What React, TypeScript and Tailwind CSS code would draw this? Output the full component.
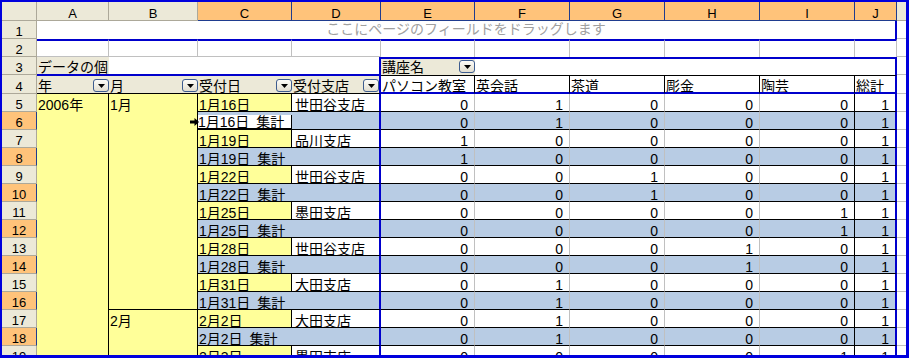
import clsx from "clsx"

const detail = [
  { date: "1月16日", branch: "世田谷支店", v: [0, 1, 0, 0, 0, 1] },
  { date: "1月19日", branch: "品川支店", v: [1, 0, 0, 0, 0, 1] },
  { date: "1月22日", branch: "世田谷支店", v: [0, 0, 1, 0, 0, 1] },
  { date: "1月25日", branch: "墨田支店", v: [0, 0, 0, 0, 1, 1] },
  { date: "1月28日", branch: "世田谷支店", v: [0, 0, 0, 1, 0, 1] },
  { date: "1月31日", branch: "大田支店", v: [0, 1, 0, 0, 0, 1] },
  { date: "2月2日", branch: "大田支店", v: [0, 1, 0, 0, 0, 1] },
  { date: "2月3日", branch: "墨田支店", v: [0, 0, 0, 0, 1, 1] },
]

const colItems = ["パソコン教室", "英会話", "茶道", "彫金", "陶芸", "総計"]

function DropBtn() {
  return (
    <span className="ml-auto flex h-[13px] w-[16px] shrink-0 items-center justify-center rounded-[3px] border border-[#3d5c8f] bg-linear-to-b from-[#fdfcf8] to-[#e2ded0]">
      <svg width="7" height="4" viewBox="0 0 7 4">
        <path d="M0 0h7L3.5 4z" fill="#000" />
      </svg>
    </span>
  )
}

function RowHead({ n }: { n: number }) {
  const sel = n >= 6 && n <= 18 && n % 2 === 0
  return (
    <div
      className={clsx(
        "flex items-end justify-center border-r border-b text-[13px] leading-[12px] text-black",
        sel ? "border-b-[#aca899] border-r-[#1f3c8f] bg-[#ffc37a]" : "border-[#aca899] bg-[#ece9d8]"
      )}
    >
      {n}
    </div>
  )
}

function Nums({ v, sub }: { v: number[]; sub: boolean }) {
  return (
    <>
      {v.map((n, i) => (
        <div
          key={i}
          className={clsx(
            "flex items-end justify-end border-b border-b-black pr-[6px] leading-[12px]",
            sub ? "bg-[#b8cce4]" : "bg-white",
            i < 4 && "border-r border-r-[#c0c0c0]",
            i === 4 && "border-r border-r-black",
            i === 5 && "border-r-2 border-r-[#0000cc]"
          )}
        >
          {n}
        </div>
      ))}
      <div className="border-b border-[#c0c0c0]" />
    </>
  )
}

function DataRows() {
  const out: JSX.Element[] = []
  detail.forEach((d, i) => {
    const r = 5 + i * 2
    out.push(<RowHead key={"h" + r} n={r} />)
    if (r === 5) {
      out.push(
        <div key="a5" className="row-span-15 border-r border-black bg-[#ffff99]">
          <div className="flex h-[17px] items-end pl-[1px] leading-[12px]">2006年</div>
        </div>
      )
      out.push(
        <div key="b5" className="row-span-12 border-r border-b border-black bg-[#ffff99]">
          <div className="flex h-[17px] items-end pl-[1px] leading-[12px]">1月</div>
        </div>
      )
    }
    if (r === 17) {
      out.push(
        <div key="b17" className="row-span-3 border-r border-black bg-[#ffff99]">
          <div className="flex h-[17px] items-end pl-[1px] leading-[12px]">2月</div>
        </div>
      )
    }
    out.push(
      <div key={"c" + r} className="flex items-end overflow-hidden whitespace-nowrap border-r border-b border-black bg-[#ffff99] pl-[1px] leading-[12px]">
        {d.date}
      </div>
    )
    out.push(
      <div key={"d" + r} className="flex items-end overflow-hidden whitespace-nowrap border-b border-r-2 border-b-black border-r-[#0000cc] bg-white pl-[3px] leading-[12px]">
        {d.branch}
      </div>
    )
    out.push(<Nums key={"n" + r} v={d.v} sub={false} />)

    if (i === 7) return
    const s = r + 1
    out.push(<RowHead key={"h" + s} n={s} />)
    if (s === 6) {
      out.push(
        <div key="c6" className="border-b border-black bg-[#b8cce4] pt-[3px]">
          <div className="flex h-full items-end overflow-hidden whitespace-nowrap border-r border-b border-black bg-white leading-[12px]">
            {d.date}
            <span className="inline-block w-[7px]" />
            集計
          </div>
        </div>
      )
      out.push(<div key="d6" className="border-b border-r-2 border-b-black border-r-[#0000cc] bg-[#b8cce4]" />)
    } else {
      out.push(
        <div key={"c" + s} className="col-span-2 flex items-end overflow-hidden whitespace-nowrap border-b border-r-2 border-b-black border-r-[#0000cc] bg-[#b8cce4] pl-[1px] leading-[12px]">
          {d.date}
          <span className="inline-block w-[7px]" />
          集計
        </div>
      )
    }
    out.push(<Nums key={"n" + s} v={d.v} sub={true} />)
  })
  return <>{out}</>
}

export default function App() {
  return (
    <div className="relative h-[358px] w-[909px] overflow-hidden border-t-2 border-r-[3px] border-b-[3px] border-l-2 border-[#0000dd] bg-white font-['Liberation_Sans','Noto_Sans_CJK_JP',sans-serif] text-[14px] text-black">
      <div className="grid grid-cols-[35px_72px_89px_94px_89px_94px_95px_95px_95px_95px_42px_9px] grid-rows-[19px_18px_18px_18px_19px_repeat(15,18px)]">
        {/* column headers */}
        <div className="border-r border-b border-[#aca899] bg-[#ece9d8]" />
        {["A", "B"].map((c) => (
          <div key={c} className="flex items-end justify-center border-r border-b border-[#aca899] bg-[#ece9d8] text-[13px] leading-[12px]">
            {c}
          </div>
        ))}
        {["C", "D", "E", "F", "G", "H", "I", "J"].map((c) => (
          <div key={c} className="flex items-end justify-center border-r border-b border-[#1f3c8f] bg-[#ffc37a] text-[13px] leading-[12px]">
            {c}
          </div>
        ))}
        <div className="border-b border-[#aca899] bg-[#ece9d8]" />

        {/* row 1: page field drop area */}
        <RowHead n={1} />
        <div className="col-span-10 flex items-end justify-center border-r-2 border-[#0000cc] pb-[4px] leading-[12px] text-[#a0a0a0]">
          ここにページのフィールドをドラッグします
        </div>
        <div className="border-b border-[#c0c0c0]" />

        {/* row 2 */}
        <RowHead n={2} />
        {[0, 1, 2, 3].map((i) => (
          <div key={i} className="border-t-2 border-r border-b border-t-[#0000cc] border-r-[#c0c0c0] border-b-[#c0c0c0]" />
        ))}
        {[0, 1, 2, 3, 4, 5].map((i) => (
          <div key={"e" + i} className="border-t-2 border-r border-t-[#0000cc] border-r-[#c0c0c0]" />
        ))}
        <div className="border-b border-[#c0c0c0]" />

        {/* row 3 */}
        <RowHead n={3} />
        <div className="flex items-end overflow-hidden whitespace-nowrap border-b border-[#0000cc] bg-[#ece9d8] pb-[1px] pl-[1px] leading-[12px]">
          データの個
        </div>
        <div className="border-b border-[#0000cc]" />
        <div className="border-b border-[#0000cc]" />
        <div className="border-r-2 border-b border-[#0000cc]" />
        <div className="flex items-end border-t-2 border-[#0000cc] bg-[#ece9d8] pb-[2px] pl-[1px] leading-[12px]">
          講座名
          <DropBtn />
        </div>
        <div className="border-t-2 border-[#0000cc]" />
        <div className="border-t-2 border-[#0000cc]" />
        <div className="border-t-2 border-[#0000cc]" />
        <div className="border-t-2 border-[#0000cc]" />
        <div className="border-t-2 border-r-2 border-[#0000cc]" />
        <div className="border-b border-[#c0c0c0]" />

        {/* row 4: row fields and column items */}
        <RowHead n={4} />
        {["年", "月", "受付日"].map((f) => (
          <div key={f} className="flex items-end border-t border-b border-t-[#0000cc] border-b-black bg-[#ece9d8] pb-[1px] pl-[1px] leading-[12px]">
            {f}
            <DropBtn />
          </div>
        ))}
        <div className="flex items-end border-t border-r-2 border-b border-t-[#0000cc] border-r-[#0000cc] border-b-black bg-[#ece9d8] pb-[1px] pl-[1px] leading-[12px]">
          受付支店
          <DropBtn />
        </div>
        {colItems.map((c, i) => (
          <div
            key={c}
            className={clsx(
              "flex items-end overflow-hidden whitespace-nowrap border-t border-b-2 border-t-black border-b-[#0000cc] pl-[1px] leading-[12px]",
              i < 5 ? "border-r border-r-black" : "border-r-2 border-r-[#0000cc]"
            )}
          >
            {c}
          </div>
        ))}
        <div className="border-b border-[#c0c0c0]" />

        <DataRows />
      </div>

      {/* pivot item selection cursor */}
      <svg className="absolute top-[116px] left-[188px]" width="9" height="8" viewBox="0 0 9 8">
        <path d="M0 2.5h4.5V0L9 4 4.5 8V5.5H0z" fill="#000" />
      </svg>
    </div>
  )
}
